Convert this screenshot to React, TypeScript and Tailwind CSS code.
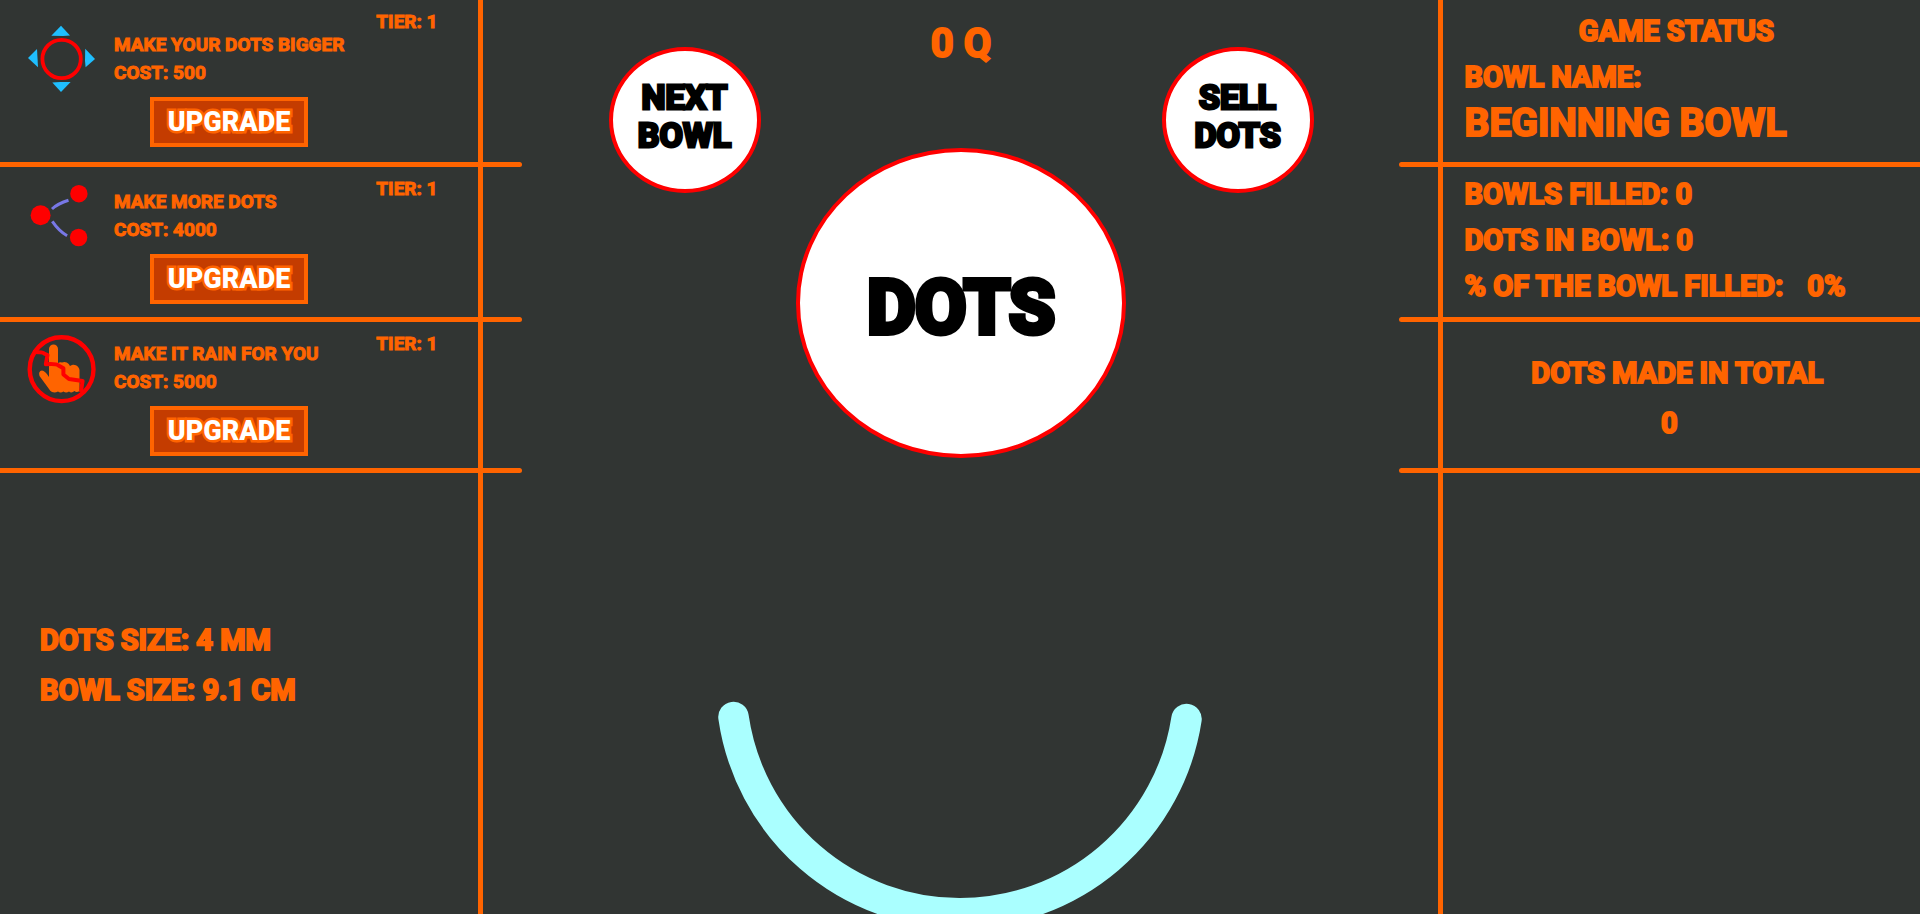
import type { ReactNode } from "react";

function BiggerIcon() {
  return (
    <svg viewBox="0 0 68 68" className="size-17 shrink-0 overflow-visible" aria-hidden="true">
      <circle cx="33.6" cy="34" r="19.2" fill="none" stroke="#f00" strokeWidth="3.8" />
      <g fill="#1fbfff">
        <path d="M33 .7 42 10.6 35 11 23.3 10.7Z" />
        <path d="M0 33 9 24 10 42.3Z" />
        <path d="M67 34 57.6 42.3 57 36 57.2 23.7Z" />
        <path d="M33 67 24.3 57.6 32 57 42.6 57Z" />
      </g>
    </svg>
  );
}

function MoreIcon() {
  return (
    <svg viewBox="0 0 68 68" className="size-17 shrink-0 overflow-visible" aria-hidden="true">
      <g fill="none" stroke="#7878e6" strokeWidth="3">
        <path d="M24 27Q30 21.500 40.500 18.300" />
        <path d="M24.300 39.300Q31 49 39.100 53.700" />
      </g>
      <g fill="#f00">
        <circle cx="12.600" cy="33.200" r="10" />
        <circle cx="50.900" cy="11.700" r="8.700" />
        <circle cx="50.600" cy="55.500" r="8.700" />
      </g>
    </svg>
  );
}

function RainIcon() {
  return (
    <svg viewBox="0 0 68 68" className="size-17 shrink-0 overflow-visible" aria-hidden="true">
      <path
        fill="#ff6400"
        d="M21 43V15a4.500 4.500 0 0 1 9 0V29a5 5 0 0 1 4-.5 6 6 0 0 1 8 3.500 6 6 0 0 1 9.500 4V57q-3 2-5 0-3 2.500-5.500.500-3 2-5.500 0-3 2-5.500 0-3 1.500-6 .5-2-1-3-3L11.500 42q-1.500-5 2.500-5.500 3 0 7 6.500Z"
      />
      <g fill="none" stroke="#f00" strokeLinejoin="round">
        <circle cx="33.600" cy="35.200" r="31.900" strokeWidth="4.400" />
        <path
          strokeWidth="4"
          d="M5 18Q15 18 16 19.500L19.500 21 17.800 30.300Q28 29.500 30.500 31.500L35.400 34.300V40.500L41 45 54.600 47 52.900 58"
        />
      </g>
    </svg>
  );
}

const upgrades = [
  { title: "MAKE YOUR DOTS BIGGER", cost: 500, tier: 1, icon: <BiggerIcon />, box: "min-h-[162px] pb-[15px]" },
  { title: "MAKE MORE DOTS", cost: 4000, tier: 1, icon: <MoreIcon />, box: "min-h-[150px] pb-[13px]" },
  { title: "MAKE IT RAIN FOR YOU", cost: 5000, tier: 1, icon: <RainIcon />, box: "min-h-[146px] pb-3" },
];

function Rule({ side }: { side: "left" | "right" }) {
  return (
    <hr
      className={
        side === "left"
          ? "-mr-11 h-[5px] rounded-r-full border-0 bg-[#ff6400]"
          : "-ml-11 h-[5px] rounded-l-full border-0 bg-[#ff6400]"
      }
    />
  );
}

function Upgrade({ title, cost, tier, icon, box }: (typeof upgrades)[number]) {
  return (
    <section className={`flex flex-col ${box}`}>
      <div className="flex flex-1 items-end pr-10 pl-7 text-[19px] leading-7 [-webkit-text-stroke:1px_#ff6400]">
        <div className="pb-1">{icon}</div>
        <div className="flex-1 pb-[10px] pl-[18px] whitespace-nowrap">
          <h2>{title}</h2>
          <p>COST: {cost}</p>
        </div>
        <p className="self-start pt-2">TIER: {tier}</p>
      </div>
      <button
        type="button"
        className="ml-[150px] h-[50px] w-[158px] cursor-pointer self-start border-4 border-[#ff6400] bg-[#c43c00] text-[27px] leading-10 font-black text-white [-webkit-text-stroke:5px_#ff6400] [paint-order:stroke_fill]"
      >
        UPGRADE
      </button>
    </section>
  );
}

function SmallDot({ children }: { children: ReactNode }) {
  return (
    <button
      type="button"
      className="mt-[47px] flex h-[146px] w-[152px] shrink-0 cursor-pointer flex-col items-center justify-center rounded-[50%] border-4 border-[#f00] bg-white pb-2 text-[34px] leading-[38px] font-bold text-black [-webkit-text-stroke:3px_#000]"
    >
      {children}
    </button>
  );
}

export default function App() {
  return (
    <div className="grid min-h-screen grid-cols-[1fr_5px_2fr_5px_1fr] overflow-hidden bg-[#313533] font-[Roboto,'Liberation_Sans',sans-serif] font-bold text-[#ff6400]">
      <aside className="flex min-w-0 flex-col">
        {upgrades.map((upgrade) => (
          <div key={upgrade.title}>
            <Upgrade {...upgrade} />
            <Rule side="left" />
          </div>
        ))}
        <div className="px-10 pt-[142px] text-[29px] leading-[50px] [-webkit-text-stroke:2px_#ff6400]">
          <p>DOTS SIZE: 4 MM</p>
          <p>BOWL SIZE: 9.1 CM</p>
        </div>
      </aside>

      <div className="bg-[#ff6400]" />

      <main className="flex min-w-0 flex-col">
        <div className="flex items-start justify-between pr-[124px] pl-[126px]">
          <SmallDot>
            <span>NEXT</span>
            <span>BOWL</span>
          </SmallDot>
          <div className="flex flex-col items-center gap-20 pt-5">
            <p className="text-[40px] leading-[48px] [-webkit-text-stroke:2px_#ff6400]">0 Q</p>
            <button
              type="button"
              className="h-[310px] w-[330px] cursor-pointer rounded-[50%] border-4 border-[#f00] bg-white pt-2 text-[74px] font-bold text-black [-webkit-text-stroke:6px_#000]"
            >
              DOTS
            </button>
          </div>
          <SmallDot>
            <span>SELL</span>
            <span>DOTS</span>
          </SmallDot>
        </div>
        <svg viewBox="0 0 520 224" className="mt-auto h-[224px] w-[520px] self-center" aria-hidden="true">
          <path
            d="M33.500 27A229 229 0 0 0 486.500 29"
            fill="none"
            stroke="#aff"
            strokeWidth="30.500"
            strokeLinecap="round"
          />
        </svg>
      </main>

      <div className="bg-[#ff6400]" />

      <aside className="flex min-w-0 flex-col text-[29px] leading-[46px] [-webkit-text-stroke:2px_#ff6400]">
        <section className="min-h-[162px] pt-2 pl-[22px]">
          <h1 className="pr-8 text-center">GAME STATUS</h1>
          <p>BOWL NAME:</p>
          <p className="text-[39px]">BEGINNING BOWL</p>
        </section>
        <Rule side="right" />
        <section className="min-h-[150px] pt-1 pl-[22px] whitespace-nowrap">
          <p>BOWLS FILLED: 0</p>
          <p>DOTS IN BOWL: 0</p>
          <p className="flex gap-6">
            <span>% OF THE BOWL FILLED:</span>
            <span>0%</span>
          </p>
        </section>
        <Rule side="right" />
        <section className="flex min-h-[146px] flex-col items-center gap-1 pt-7 pr-2">
          <h2>DOTS MADE IN TOTAL</h2>
          <p className="pr-4">0</p>
        </section>
        <Rule side="right" />
      </aside>
    </div>
  );
}
